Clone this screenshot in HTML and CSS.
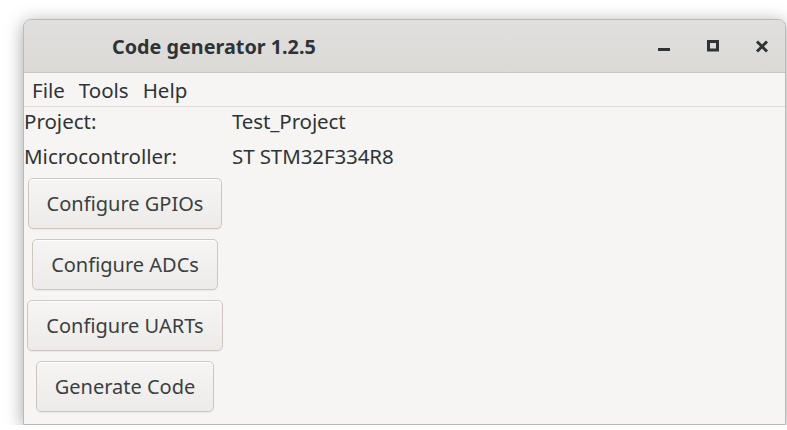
FILE: index.html
```html
<!DOCTYPE html>
<html lang="en">
<head>
<meta charset="utf-8">
<title>Code generator 1.2.5</title>
<link rel="stylesheet" href="styles.css">
</head>
<body>
<div class="window">
  <header class="titlebar">
    <span class="title">Code generator 1.2.5</span>
    <div class="controls">
      <button class="ctl" aria-label="Minimize">
        <svg width="14" height="14" viewBox="0 0 14 14"><rect x="1" y="8" width="12" height="3" fill="#2e3436"/></svg>
      </button>
      <button class="ctl" aria-label="Maximize">
        <svg width="14" height="14" viewBox="0 0 14 14"><rect x="2.5" y="1.5" width="9" height="8.5" fill="none" stroke="#2e3436" stroke-width="3"/></svg>
      </button>
      <button class="ctl" aria-label="Close">
        <svg width="14" height="14" viewBox="0 0 14 14"><path d="M2 1.5 L12 11.5 M12 1.5 L2 11.5" stroke="#2e3436" stroke-width="3" stroke-linecap="butt"/></svg>
      </button>
    </div>
  </header>
  <nav class="menubar">
    <span class="menu-item">File</span>
    <span class="menu-item">Tools</span>
    <span class="menu-item">Help</span>
  </nav>
  <main class="content">
    <span class="label">Project:</span>
    <span class="value">Test_Project</span>
    <span class="label">Microcontroller:</span>
    <span class="value">ST STM32F334R8</span>
    <div class="actions">
      <button class="btn">Configure GPIOs</button>
      <button class="btn">Configure ADCs</button>
      <button class="btn">Configure UARTs</button>
      <button class="btn">Generate Code</button>
    </div>
  </main>
</div>
</body>
</html>
```
FILE: styles.css
```css
html, body {
  margin: 0;
  padding: 0;
  background: #ffffff;
  overflow: hidden;
}

body {
  font-family: "Noto Sans", "Open Sans", sans-serif;
  color: #2e3436;
}

.window {
  margin: 19px 0 0 23px;
  width: 763px;
  height: 406px;
  box-sizing: border-box;
  border: 1px solid #bdb9b6;
  border-radius: 8px 8px 0 0;
  background: #f6f5f4;
  box-shadow: 0 3px 18px rgba(0, 0, 0, 0.36);
  display: flex;
  flex-direction: column;
  overflow: hidden;
}

/* title bar */
.titlebar {
  height: 53px;
  box-sizing: border-box;
  flex: none;
  display: flex;
  align-items: center;
  background: linear-gradient(#e1dfdd, #dcdad7);
  border-bottom: 1px solid #c8c4c1;
  padding-left: 88px;
}

.title {
  font-weight: 700;
  font-size: 19.8px;
  color: #2e3436;
  line-height: 1;
  margin-top: 1px;
}

.controls {
  margin-left: auto;
  display: flex;
  gap: 35px;
  margin-right: 16px;
  margin-top: 2px;
}

.ctl {
  border: none;
  background: none;
  padding: 0;
  width: 14px;
  height: 14px;
  display: flex;
}

/* menu bar */
.menubar {
  height: 34px;
  box-sizing: border-box;
  flex: none;
  display: flex;
  align-items: center;
  gap: 14px;
  padding-left: 8px;
  border-bottom: 1px solid #dedbd8;
  font-size: 20.5px;
  color: #2e3436;
}

.menu-item {
  line-height: 1;
  margin-top: 1px;
}

/* content grid */
.content {
  display: grid;
  grid-template-columns: 208px 1fr;
  grid-auto-rows: min-content;
  row-gap: 8px;
  font-size: 20.5px;
  line-height: 27px;
  padding-top: 1px;
}

.label,
.value {
  color: #2e3436;
}

.value {
  letter-spacing: -0.1px;
}

.actions {
  grid-column: 1;
  width: 202px;
  display: flex;
  flex-direction: column;
  align-items: center;
  gap: 10px;
  margin-top: 0;
}

.btn {
  font-family: inherit;
  font-size: 20px;
  color: #3a3f41;
  height: 51px;
  padding: 0 18px;
  border: 1px solid #cdc7c2;
  border-radius: 5px;
  background: linear-gradient(#f6f5f4, #edebe9);
  box-shadow: inset 0 1px #ffffff, 0 1px 1px rgba(0, 0, 0, 0.05);
}
```
